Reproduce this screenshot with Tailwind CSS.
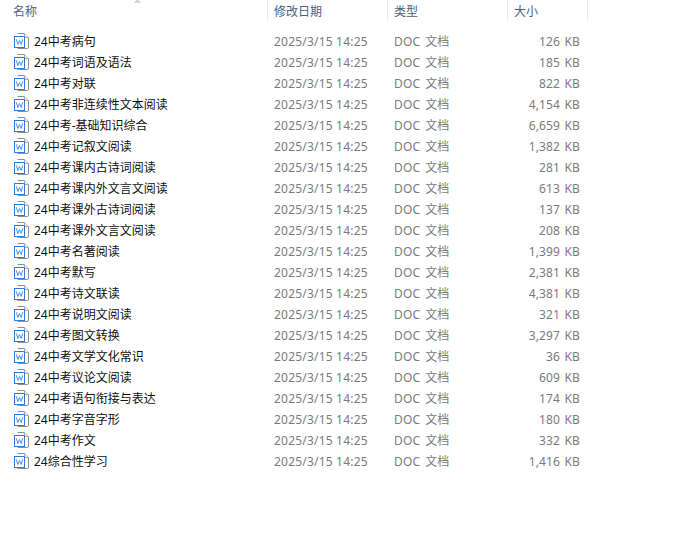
<!DOCTYPE html>
<html lang="zh-CN">
<head>
    <meta charset="UTF-8">
    <title>文件列表</title>
    <script src="https://cdn.jsdelivr.net/npm/@tailwindcss/browser@4"></script>
</head>
<body class="bg-white font-['Noto_Sans','Noto_Sans_CJK_SC',sans-serif] text-[12px] leading-[21px] overflow-hidden">
    <div class="relative w-[680px] h-[547px]">
        <!-- Sort arrow, cut off by the top edge -->
        <svg class="absolute left-[134px] top-0" width="7" height="3" viewBox="0 0 7 3"><path d="M0.5 3 L3.5 0 L6.5 3" fill="#cfe0f0" stroke="#8fb0cf" stroke-width="0.7"/></svg>

        <!-- Column headers -->
        <div class="flex h-[20px] text-[#4c607a] leading-[23px]">
            <div class="w-[268px] pl-[13px] border-r border-[#e6ecf3]">名称</div>
            <div class="w-[120px] pl-[6px] border-r border-[#e6ecf3]">修改日期</div>
            <div class="w-[120px] pl-[6px] border-r border-[#e6ecf3]">类型</div>
            <div class="w-[80px] pl-[6px] border-r border-[#e6ecf3]">大小</div>
        </div>

        <!-- File rows -->
        <div id="rows" class="pt-[11px]"></div>
    </div>

    <script>
        const files = [
            ['24中考病句', '126'], ['24中考词语及语法', '185'], ['24中考对联', '822'],
            ['24中考非连续性文本阅读', '4,154'], ['24中考-基础知识综合', '6,659'], ['24中考记叙文阅读', '1,382'],
            ['24中考课内古诗词阅读', '281'], ['24中考课内外文言文阅读', '613'], ['24中考课外古诗词阅读', '137'],
            ['24中考课外文言文阅读', '208'], ['24中考名著阅读', '1,399'], ['24中考默写', '2,381'],
            ['24中考诗文联读', '4,381'], ['24中考说明文阅读', '321'], ['24中考图文转换', '3,297'],
            ['24中考文学文化常识', '36'], ['24中考议论文阅读', '609'], ['24中考语句衔接与表达', '174'],
            ['24中考字音字形', '180'], ['24中考作文', '332'], ['24综合性学习', '1,416']
        ];

        const icon = `<svg class="ml-[14px] mr-[5px] mt-[2px] self-start shrink-0" width="15" height="16" viewBox="0 0 15 16">
            <path d="M3.5 0.5 H10.5 L14.5 4.5 V14 Q14.5 15.5 13 15.5 H3.5" fill="#fff" stroke="#8a8f96"/>
            <path d="M10.5 0.5 V4.5 H14.5" fill="#eef0f2" stroke="#a8adb3"/>
            <rect x="0.5" y="3.5" width="10" height="11" fill="#fff" stroke="#2a7bdc"/>
            <path d="M2.3 6.3 L3.8 11.5 L5.5 7.5 L7.2 11.5 L8.7 6.3" fill="none" stroke="#4a90e2" stroke-width="1"/>
        </svg>`;

        document.getElementById('rows').innerHTML = files.map(([name, size]) => `
            <div class="flex items-center h-[21px] text-[#7b7b7b] whitespace-nowrap">
                ${icon}
                <div class="w-[240px] text-[#101010]">${name}</div>
                <div class="w-[120px] tracking-[0.2px]">2025/3/15 14:25</div>
                <div class="w-[106px] tracking-[0.2px] [word-spacing:1.5px]">DOC 文档</div>
                <div class="w-[80px] text-right tracking-[0.1px] [word-spacing:1.5px]">${size} KB</div>
            </div>`).join('');
    </script>
</body>
</html>
